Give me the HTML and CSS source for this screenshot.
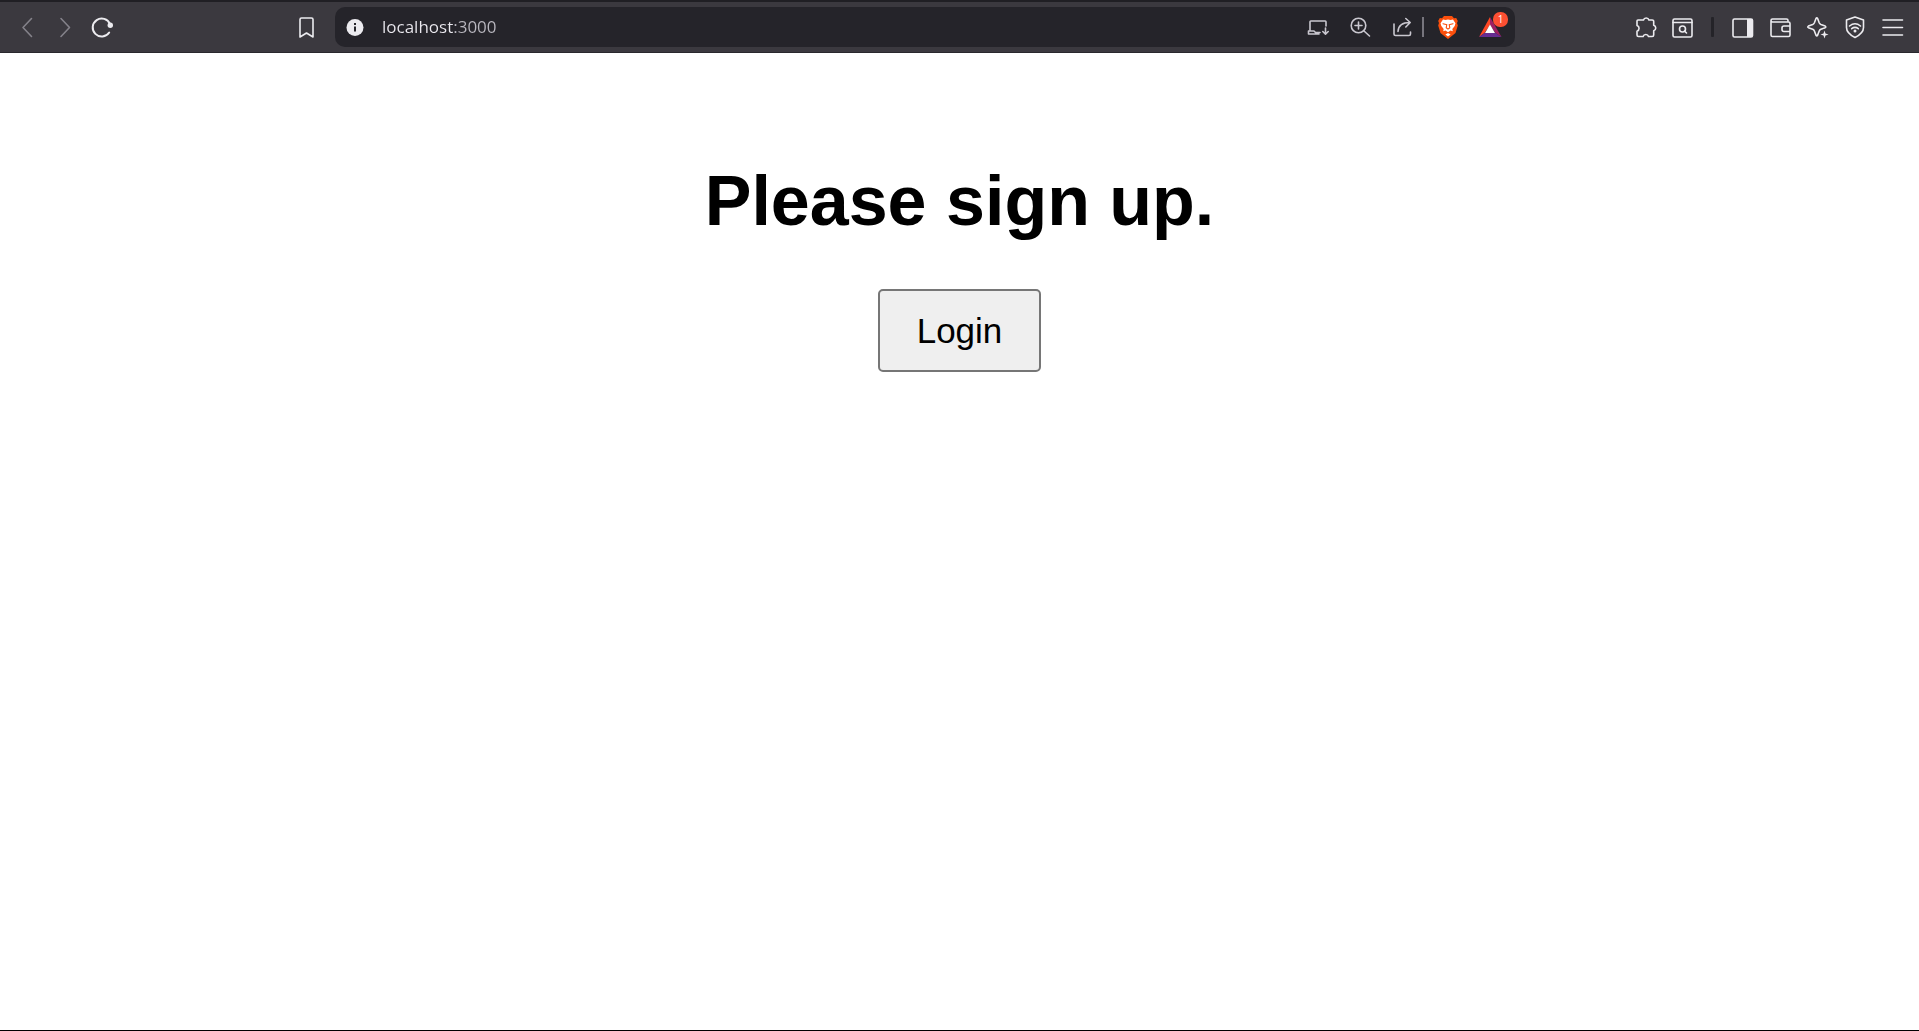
FILE: index.html
```html
<!DOCTYPE html>
<html lang="en">
<head>
<meta charset="utf-8">
<title>Sign up</title>
<link rel="stylesheet" href="styles.css">
</head>
<body>
<header class="toolbar">
  <nav class="nav" aria-label="Navigation">
    <button class="icon dim" aria-label="Back"><svg viewBox="0 0 24 24"><path d="M16.5 3.500 8 12.500l8.500 9"/></svg></button>
    <button class="icon dim" aria-label="Forward"><svg viewBox="0 0 24 24"><path d="m8 3.500 8.500 9-8.500 9"/></svg></button>
    <button class="icon" aria-label="Reload"><svg viewBox="0 0 24 24"><path stroke-width="2" d="M18.200 17.500a9 9 0 1 1 .8-8.500"/><circle class="solid" cx="19.300" cy="10.300" r="2.700"/></svg></button>
    <button class="icon bookmark" aria-label="Bookmark"><svg viewBox="0 0 24 24"><path d="M7.500 3h10a1.500 1.500 0 0 1 1.500 1.500V22l-6.500-4L6 22V4.500A1.500 1.500 0 0 1 7.500 3Z"/></svg></button>
  </nav>
  <form class="address">
    <button type="button" class="icon" aria-label="Site information"><svg viewBox="0 0 24 24"><circle class="solid" cx="12" cy="12.500" r="8.500"/><path class="info" d="M12 11.500v5M12 8v2"/></svg></button>
    <input class="url" type="text" value="localhost:3000" aria-label="Address">
    <div class="actions">
      <button type="button" class="icon soft" aria-label="Install"><svg viewBox="0 0 24 24"><path d="M20 11V6.800A.8.8 0 0 0 19.200 6H4.800a.8.8 0 0 0-.8.8V16M2.500 16v3H13M3 16h5l1.500 1.500H14M19.500 13v6M16.800 16.500l2.700 2.700 2.700-2.700"/></svg></button>
      <button type="button" class="icon soft" aria-label="Zoom"><svg viewBox="0 0 24 24"><circle cx="10.500" cy="10.500" r="7.300"/><path d="m16 16 5.500 5M10.500 7v7M7 10.500h7"/></svg></button>
      <button type="button" class="icon soft" aria-label="Share"><svg viewBox="0 0 24 24"><path d="M4 9v10a1.500 1.500 0 0 0 1.500 1.500H19a1.500 1.500 0 0 0 1.500-1.500v-2M8 16.500C8.300 10.500 11.500 7.500 20 7.500M15.800 3.500l4.400 4-4.400 4.500"/></svg></button>
    </div>
    <span class="rule light"></span>
    <div class="actions">
      <button type="button" class="icon" aria-label="Shields"><svg viewBox="0 0 24 24"><path fill="#fb4f0c" stroke="none" d="M8 1h8l2 2.200 2.200-.2 1.600 3-.8 2 .8 2.500-2.300 7.500L12 24l-7.500-6L2.200 10.500 3 8l-.8-2 1.600-3L6 3.200Z"/><path fill="#fff" stroke="none" d="m7 4.500 2.500.5 2.500-.5 2.500.5 2.500-.5 2.500 3.700-.8 2.800-2.400 3 .5 2.200-2.300-.7L12 17.200l-2.500-1.700-2.300.7.500-2.200-2.400-3-.8-2.800Zm5 13.500 2.600 1.500L12 21.500l-2.600-2Z"/><path stroke="#fb4f0c" stroke-width="1.100" d="M7 8.700l3 .8M17 8.700l-3 .8M10.800 9.500l-.6 3.300 1.800 1.300 1.800-1.300-.6-3.300"/></svg></button>
      <button type="button" class="icon rewards" aria-label="Rewards, 1 new"><svg viewBox="0 0 24 24"><path fill="#ff4724" stroke="none" d="M12 2v8L6.500 18 1 22Z"/><path fill="#9e1f63" stroke="none" d="m12 2 11.500 20-6-4L12 10Z"/><path fill="#662d91" stroke="none" d="M1 22h22.500l-6-4h-11Z"/><path fill="#fff" stroke="none" d="m12 9.500 5 8.500H7Z"/></svg><span class="badge">1</span></button>
    </div>
  </form>
  <div class="tools">
    <button class="icon" aria-label="Extensions"><svg viewBox="0 0 24 24"><path d="M6 5h5.500a2.800 2.800 0 0 1 5.400 0h3.300A1.500 1.500 0 0 1 21.700 6.500v3.800a2.800 2.800 0 0 1 0 5.400v4.300a1.500 1.500 0 0 1-1.500 1.500h-3.700a2.800 2.800 0 0 0-5.400 0H6.500A1.500 1.500 0 0 1 5 20v-3.800a3 3 0 0 0 0-5.700V6a1 1 0 0 1 1-1Z"/></svg></button>
    <button class="icon" aria-label="Search tabs"><svg viewBox="0 0 24 24"><rect x="4" y="4" width="19" height="18" rx="1.500"/><path d="M4 7.500h19M15.500 16l2 2"/><circle cx="13.500" cy="14" r="3"/></svg></button>
    <span class="rule dark"></span>
    <button class="icon" aria-label="Sidebar"><svg viewBox="0 0 24 24"><rect x="1" y="4" width="19.500" height="18" rx="1.500"/><path class="solid" d="M15 4h5v18h-5Z"/></svg></button>
    <button class="icon" aria-label="Wallet"><svg viewBox="0 0 24 24"><path d="M2 6v14a1.500 1.500 0 0 0 1.500 1.500h16a1.500 1.500 0 0 0 1.500-1.500V8.500A1.500 1.500 0 0 0 19.500 7H3.500A1.500 1.500 0 0 1 2 5.500 1.500 1.500 0 0 1 3.500 4h14a1.500 1.500 0 0 1 1.500 1.500V7M21 11h-6a2 2 0 0 0-2 2v1.500a2 2 0 0 0 2 2h6Z"/></svg></button>
    <button class="icon" aria-label="Leo AI"><svg viewBox="0 0 24 24"><path d="M10 3.500q.8-1.300 1.600 0l1.600 4.300q.5 1.200 1.700 1.700l4.300 1.600q1.200.8 0 1.600l-4.300 1.600q-1.200.5-1.700 1.700l-1.600 4.300q-.8 1.200-1.600 0l-1.600-4.300q-.5-1.200-1.700-1.700L2.400 12.700q-1.200-.8 0-1.600l4.300-1.600q1.200-.5 1.700-1.700Z"/><path class="halo" d="m18.500 15.500 1 3 3 1-3 1-1 3-1-3-3-1 3-1Z"/><path class="solid" d="m18.500 15.500 1 3 3 1-3 1-1 3-1-3-3-1 3-1Z"/></svg></button>
    <button class="icon" aria-label="VPN"><svg viewBox="0 0 24 24"><path d="m12 2 8.500 3v7.500c0 4.500-3.500 7.500-8.500 10-5-2.500-8.500-5.500-8.500-10V5ZM6.500 11q5.500-4.500 11 0M8.700 13.700q3.300-2.600 6.600 0"/><circle class="solid" cx="12" cy="16" r="1.500"/></svg></button>
    <button class="icon" aria-label="Menu"><svg viewBox="0 0 24 24"><path d="M3 5h19.500M3 12.500h19.500M3 20h19.500"/></svg></button>
  </div>
</header>
<main class="page">
  <h1 class="title">Please sign up.</h1>
  <button class="login">Login</button>
</main>
</body>
</html>
```
FILE: styles.css
```css
* { box-sizing: border-box; }

body {
  margin: 0;
  min-height: 100vh;
  display: flex;
  flex-direction: column;
  background: #fff;
  color: #000;
  font-family: "Liberation Sans", Arial, sans-serif;
}

.toolbar {
  display: grid;
  grid-template-columns: 335px 1fr 404px;
  align-items: center;
  height: 53px;
  background: #3b393f;
  border-top: 2px solid #201f24;
  border-bottom: 1px solid #29282d;
}

.nav {
  display: flex;
  gap: 14px;
  padding: 0 17px 0 15px;
}

.bookmark { margin-left: auto; }

.icon {
  position: relative;
  flex: none;
  width: 24px;
  height: 24px;
  padding: 0;
  border: 0;
  background: none;
  color: #ecebef;
}

.soft { color: #c9c7cf; }
.dim { color: #84828a; }

.icon svg {
  display: block;
  width: 24px;
  height: 24px;
  overflow: visible;
  fill: none;
  stroke: currentColor;
  stroke-width: 1.6;
  stroke-linejoin: round;
  stroke-linecap: round;
}

.icon .solid { fill: currentColor; stroke: none; }
.icon .halo { fill: #3b393f; stroke: #3b393f; stroke-width: 3; }
.icon .info { stroke: #25242a; stroke-width: 2; stroke-linecap: butt; }

.address {
  display: flex;
  align-items: center;
  height: 40px;
  padding: 0 13px 0 8px;
  border-radius: 10px;
  background: #25242a;
}

.url {
  flex: 1;
  min-width: 0;
  height: 24px;
  margin-left: 15px;
  padding: 0;
  border: 0;
  outline: 0;
  background: linear-gradient(90deg, #eceaf0 71px, #bab8c0 71px);
  background-clip: text;
  color: transparent;
  font: 17px/24px "Segoe UI", "Open Sans", sans-serif;
}

.actions { display: flex; gap: 18px; }

.rule { flex: none; height: 20px; }
.light { width: 2px; margin: 0 12px 0 8px; background: #77757d; }
.dark { width: 3px; margin: 0 5px; border-radius: 1px; background: #242328; }

.badge {
  position: absolute;
  top: -3px;
  left: 15px;
  width: 15px;
  height: 15px;
  border-radius: 7px;
  background: #fc4f32;
  color: #fff;
  font: 10px/15px "Open Sans", sans-serif;
  text-align: center;
}

.tools {
  display: flex;
  align-items: center;
  justify-content: flex-end;
  gap: 13px;
  padding-right: 15px;
}

.page {
  flex: 1;
  display: flex;
  flex-direction: column;
  align-items: center;
  padding-top: 108px;
  border-bottom: 1px solid #000;
}

.title {
  margin: 0 0 48px;
  font-size: 70px;
  line-height: 80px;
}

.login {
  padding: 20px 37px;
  border: 2px solid #767676;
  border-radius: 5px;
  background: #efefef;
  color: #000;
  font: 35px/39px "Liberation Sans", Arial, sans-serif;
}
```
